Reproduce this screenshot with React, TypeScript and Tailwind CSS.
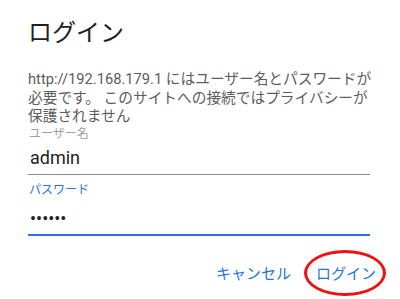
import { useState } from 'react'

const FONT = { fontFamily: 'Roboto, "Noto Sans CJK JP", sans-serif' }

export default function App() {
  const [user, setUser] = useState('admin')
  const [pass, setPass] = useState('123456')

  return (
    <div className="w-[400px] h-[299px] bg-white pl-[28px] pr-[30px] pt-[19px] overflow-hidden" style={FONT}>
      <h1 className="text-[24px] leading-[28px] text-[#212121] font-normal">ログイン</h1>

      <p className="mt-[23px] text-[14.7px] leading-[18.5px] text-[#5c5c5c]">
        <span className="block whitespace-nowrap">http://192.168.179.1 にはユーザー名とパスワードが</span>
        <span className="block whitespace-nowrap">必要です。 このサイトへの接続ではプライバシーが</span>
        <span className="block whitespace-nowrap">保護されません</span>
      </p>

      <label className="block mt-[1px] pl-[1px] text-[12px] leading-[14px] text-[#9e9e9e]">ユーザー名</label>
      <div className="mt-[5px] pb-[3px] border-b border-[#8a8a8a]">
        <input
          value={user}
          onChange={e => setUser(e.target.value)}
          className="w-full bg-transparent outline-none pl-[2px] text-[18px] leading-[24px] h-[24px] text-[#212121]"
          style={FONT}
        />
      </div>

      <label className="block mt-[8px] pl-[1px] text-[12px] leading-[14px] text-[#2a72dc]">パスワード</label>
      <div className="mt-[10px] pb-[2px] border-b-2 border-[#2a72dc]">
        <input
          type="password"
          value={pass}
          onChange={e => setPass(e.target.value)}
          className="w-full bg-transparent outline-none pl-[2px] text-[18px] leading-[24px] h-[24px] text-[#212121]"
          style={FONT}
        />
      </div>

      <div className="mt-[28px] flex justify-end items-center gap-[25px] mr-[-6px]">
        <button className="text-[15px] leading-[20px] text-[#2a72dc]" style={FONT}>キャンセル</button>
        <button className="relative text-[15px] leading-[20px] text-[#2a72dc]" style={FONT}>
          ログイン
          <span className="absolute left-[-12px] right-[-10px] top-[-14px] bottom-[-12px] rounded-[50%] border-[3px] border-[#ee1111]" />
        </button>
      </div>
    </div>
  )
}
